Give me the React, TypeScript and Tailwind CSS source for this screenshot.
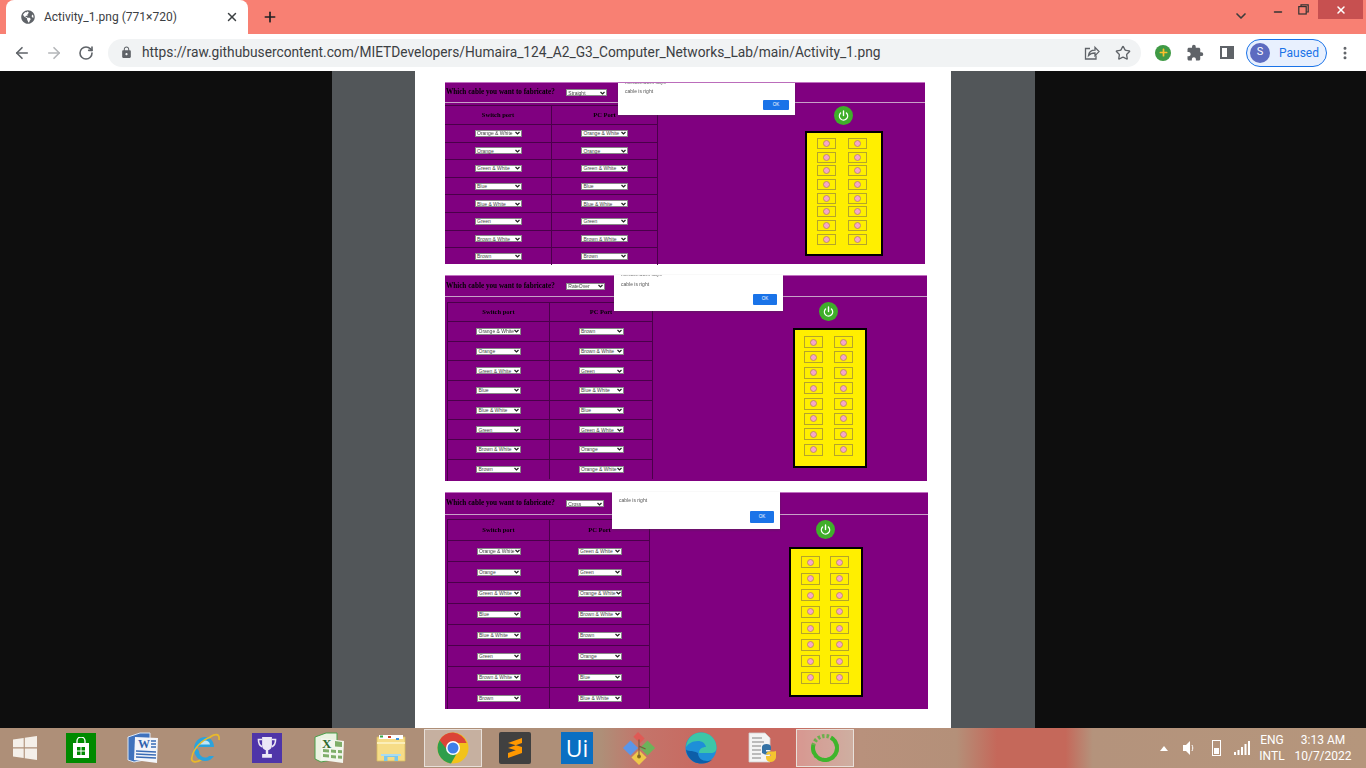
import { ArrowLeft, ArrowRight, RotateCw, Star, X, Plus, ChevronDown, Minus, Power, MoreVertical } from "lucide-react";
import { FaGlobeAmericas, FaPlus } from "react-icons/fa";
import { MdExtension, MdLock } from "react-icons/md";

const straightPc = ["Orange & White", "Orange", "Green & White", "Blue", "Blue & White", "Green", "Brown & White", "Brown"];
const rollPc = ["Brown", "Brown & White", "Green", "Blue & White", "Blue", "Green & White", "Orange", "Orange & White"];
const crossPc = ["Green & White", "Green", "Orange & White", "Brown & White", "Brown", "Orange", "Blue", "Blue & White"];

const panels = [
  {
    cable: "Straight",
    pc: straightPc,
    wrap: "mt-[11px] w-[480px] h-[182px]",
    head: "h-[19px] gap-[11px]",
    tableWrap: "mt-[2px] grid-cols-[107px_106px]",
    headRow: "h-[19px]",
    row: "h-[17.6px]",
    sel: "w-[47px]",
    headSel: "w-[41px]",
    right: "ml-[147px] w-[78px]",
    btn: "mt-[3px] mr-[2px]",
    box: "mt-[6px] h-[125px] pt-[5px] pr-[4px] gap-y-[2.7px] gap-x-[12px]",
    slot: "h-[11px]",
    dialog: "left-[173px] top-0 w-[177px] h-[32px]",
    says: "-mt-[4px] h-[6px]",
    text: "pt-[3px]",
    ok: "right-[6px] bottom-[5px] w-[26px] h-[10px]",
  },
  {
    cable: "RateOver",
    pc: rollPc,
    wrap: "mt-[11px] w-[482px] h-[206px]",
    head: "h-[20px] gap-[11px]",
    tableWrap: "mt-[5px] ml-[2px] border-l border-[#4a004a] grid-cols-[102px_103px]",
    headRow: "h-[19px]",
    row: "h-[19.7px]",
    sel: "w-[45px]",
    headSel: "w-[39px]",
    right: "ml-[140px] w-[74px]",
    btn: "mt-[5px] mr-[4px]",
    box: "mt-[7px] h-[140px] pt-[6px] pr-[3px] gap-y-[3.4px] gap-x-[11px]",
    slot: "h-[12px]",
    dialog: "left-[169px] -top-px w-[169px] h-[36px]",
    says: "-mt-[4px] h-[6px]",
    text: "pt-[4px]",
    ok: "right-[6px] bottom-[6px] w-[24px] h-[11px]",
  },
  {
    cable: "Cross",
    pc: crossPc,
    wrap: "mt-[11px] w-[483px] h-[217px]",
    head: "h-[21px] gap-[11px]",
    tableWrap: "mt-[4px] ml-[2px] border-l border-[#4a004a] grid-cols-[102px_100px]",
    headRow: "h-[21px]",
    row: "h-[21px]",
    sel: "w-[44px]",
    headSel: "w-[38px]",
    right: "ml-[139px] w-[74px]",
    btn: "mt-[5px] mr-[2px]",
    box: "mt-[8px] h-[150px] pt-[7px] pr-[2px] gap-y-[4.5px] gap-x-[10px]",
    slot: "h-[12px]",
    dialog: "left-[167px] -top-px w-[168px] h-[37px]",
    says: "h-[3px]",
    text: "pt-[2px]",
    ok: "right-[6px] bottom-[6px] w-[24px] h-[12px]",
  },
];

const switchSide = straightPc;

function SelectBox({ value, width }: { value: string; width: string }) {
  return (
    <div className={`${width} h-[7px] bg-white border-[0.5px] border-[#888] flex items-center justify-between pl-[1.5px] pr-[1px] text-[5px] leading-[6px] text-[#444] font-['Liberation_Sans',sans-serif] whitespace-nowrap`}>
      <span>{value}</span>
      <svg width="5" height="4" viewBox="0 0 10 8" className="shrink-0">
        <path d="M1 2l4 4 4-4" stroke="#222" strokeWidth="2.400" fill="none" />
      </svg>
    </div>
  );
}

function Slot({ height }: { height: string }) {
  return (
    <div className={`${height} w-[19px] border border-[#b5a52a] flex items-center justify-center`}>
      <div className="w-[7px] h-[7px] rounded-full bg-[#f5a5cc] border-[0.5px] border-[#c09060]" />
    </div>
  );
}

function Panel({ p }: { p: (typeof panels)[number] }) {
  return (
    <div className={`relative ${p.wrap} ml-[30px] bg-[#800080] border-t border-[#c070c0] text-black`}>
      <div className="blur-[0.35px] h-full flex flex-col">
        <div className={`${p.head} flex items-center pl-[1px] shrink-0`}>
          <span className="font-['Liberation_Serif',serif] font-bold text-[7.2px] whitespace-nowrap">Which cable you want to fabricate?</span>
          <SelectBox value={p.cable} width={p.headSel} />
        </div>
        <div className="h-px bg-[#c8a0c8] shrink-0" />
        <div className="flex flex-1 min-h-0">
          <div className={`${p.tableWrap} grid content-start shrink-0`}>
            <div className={`${p.headRow} border-t border-r border-[#4a004a] flex items-center justify-center font-['Liberation_Serif',serif] font-bold text-[6.5px]`}>Switch port</div>
            <div className={`${p.headRow} border-t border-r border-[#4a004a] flex items-center justify-center font-['Liberation_Serif',serif] font-bold text-[6.5px]`}>PC Port</div>
            {switchSide.map((s, i) => (
              <div key={s} className="contents">
                <div className={`${p.row} border-t border-r border-[#4a004a] flex items-center justify-center`}>
                  <SelectBox value={s} width={p.sel} />
                </div>
                <div className={`${p.row} border-t border-r border-[#4a004a] flex items-center justify-center`}>
                  <SelectBox value={p.pc[i]} width={p.sel} />
                </div>
              </div>
            ))}
          </div>
          <div className={`${p.right} flex flex-col items-center`}>
            <div className={`${p.btn} w-[19px] h-[19px] rounded-full bg-[#3fae2a] flex items-center justify-center`}>
              <Power size={11} color="white" strokeWidth={3} />
            </div>
            <div className={`${p.box} w-full border-2 border-black bg-[#ffef00] grid grid-cols-[19px_19px] justify-center content-start`}>
              {Array.from({ length: 16 }).map((_, i) => (
                <Slot key={i} height={p.slot} />
              ))}
            </div>
          </div>
        </div>
      </div>
      <div className={`absolute ${p.dialog} bg-white shadow-[0_1px_2px_rgba(60,60,60,0.4)] overflow-hidden font-['Liberation_Sans',sans-serif] text-[5px] text-[#555] pl-[7px]`}>
        <div className={`${p.says} text-[#666] leading-[6px]`}>{p.cable === "Cross" ? "" : "mietcse.ac.in says"}</div>
        <div className={p.text}>cable is right</div>
        <div className={`absolute ${p.ok} bg-[#1a73e8] rounded-[1px] text-white flex items-center justify-center text-[4.5px]`}>OK</div>
      </div>
    </div>
  );
}

function TabBar() {
  return (
    <div className="h-[34px] bg-[#f88073] flex items-end shrink-0 relative">
      <div className="ml-[6px] w-[242px] h-[34px] bg-white rounded-t-[8px] flex items-center pl-[15px] pr-[9px] text-[12px] text-[#3c4043] font-['Roboto',sans-serif]">
        <FaGlobeAmericas size={14} color="#5f6368" className="shrink-0" />
        <span className="ml-[9px] flex-1 whitespace-nowrap">Activity_1.png (771×720)</span>
        <X size={14} color="#3c4043" strokeWidth={2.500} />
      </div>
      <Plus size={16} color="#202124" strokeWidth={2.500} className="ml-[14px] mb-[9px]" />
      <ChevronDown size={16} color="#3c3c3c" strokeWidth={2.500} className="absolute left-[1233px] top-[8px]" />
      <div className="absolute right-[3px] top-0 flex items-start">
        <Minus size={12} color="#333" strokeWidth={3} className="mr-[14px] mt-[6px]" />
        <svg width="11" height="11" viewBox="0 0 11 11" className="mr-[9px] mt-[4px]" fill="none" stroke="#333" strokeWidth="1.200">
          <rect x="0.800" y="2.600" width="7.400" height="7.400" />
          <path d="M3 2.400V0.800h7.200V8H8.400" />
        </svg>
        <div className="w-[45px] h-[19px] bg-[#c75050] flex items-center justify-center">
          <X size={12} color="white" strokeWidth={3} />
        </div>
      </div>
    </div>
  );
}

function ToolBar() {
  return (
    <div className="h-[37px] bg-white flex items-center shrink-0 relative">
      <ArrowLeft size={18} color="#5f6368" strokeWidth={2.200} className="ml-[13px]" />
      <ArrowRight size={18} color="#b4b6b9" strokeWidth={2.200} className="ml-[14px]" />
      <RotateCw size={16} color="#5f6368" strokeWidth={2.400} className="ml-[15px]" />
      <div className="ml-[14px] w-[1033px] h-[28px] rounded-full bg-[#f1f3f4] flex items-center pl-[12px] pr-[10px]">
        <MdLock size={13} color="#5f6368" />
        <span className="ml-[9px] flex-1 text-[13.75px] text-[#3c4043] font-['Roboto',sans-serif] whitespace-nowrap">https://raw.githubusercontent.com/MIETDevelopers/Humaira_124_A2_G3_Computer_Networks_Lab/main/Activity_1.png</span>
        <svg width="16" height="16" viewBox="0 0 16 16" fill="none" stroke="#5f6368" strokeWidth="1.300" className="mr-[15px]">
          <path d="M6 3.500H1.500v10.500h10.500V10.500" />
          <path d="M4.500 10.500c.4-3.400 3-5.400 6.500-5.400V2.400l4 4.200-4 4V8c-2.900 0-5 .8-6.500 2.500z" />
        </svg>
        <Star size={16} color="#5f6368" strokeWidth={2} />
      </div>
      <div className="ml-[14px] w-[16px] h-[16px] rounded-full bg-[#3f9a45] flex items-center justify-center">
        <FaPlus size={9} color="#fbc02d" />
      </div>
      <MdExtension size={18} color="#5f6368" className="ml-[15px]" />
      <div className="ml-[16px] w-[14px] h-[13px] border-2 border-[#5f6368] flex justify-end">
        <div className="w-[5px] bg-[#5f6368]" />
      </div>
      <div className="ml-[12px] w-[81px] h-[28px] rounded-full border border-[#1a73e8] bg-[#e8f0fe] flex items-center pl-[3px]">
        <div className="w-[20px] h-[20px] rounded-full bg-[#5c6bc0] text-white text-[11px] flex items-center justify-center font-['Roboto',sans-serif]">S</div>
        <span className="ml-[9px] text-[12px] text-[#1a73e8] font-['Roboto',sans-serif]">Paused</span>
      </div>
      <MoreVertical size={16} color="#5f6368" strokeWidth={2.500} className="ml-[10px]" />
    </div>
  );
}

function WindowsLogo() {
  return (
    <svg width="26" height="24" viewBox="0 0 22 22" fill="#f4efe9">
      <path d="M0 3.200 9.800 1.800V10.400H0zM10.800 1.600 22 0V10.400H10.800zM0 11.500H9.800V20.200L0 18.800zM10.800 11.500H22V22L10.800 20.400z" />
    </svg>
  );
}

function Store() {
  return (
    <div className="w-[30px] h-[30px] bg-[#008a00] flex items-center justify-center">
      <svg width="20" height="22" viewBox="0 0 20 22">
        <path d="M6 6V4a4 4 0 0 1 8 0v2" stroke="white" fill="none" strokeWidth="1.300" />
        <path d="M2 6h16v15H2z" fill="white" />
        <path d="M6 10h3.500v3.500H6zM10.500 10H14v3.500h-3.500zM6 14.500h3.500V18H6zM10.500 14.500H14V18h-3.500z" fill="#008a00" />
      </svg>
    </div>
  );
}

function Word() {
  return (
    <svg width="32" height="32" viewBox="0 0 32 32">
      <path d="M1 5 13 1h10v26L7 30l-6-2z" fill="#3f72bd" stroke="#dbe6f5" strokeWidth="1" />
      <path d="M8 5l23 1-1 25-23-3z" fill="#f3f5fa" />
      <text x="11" y="16" fontSize="12" fontWeight="700" fill="#2f62ae" fontFamily="Liberation Serif, serif">W</text>
      <path d="M24 9h5M24 12h5M24 15h5M9 19l20 1M9 22l20 1M9 25l20 1" stroke="#3a6cb5" strokeWidth="1.500" />
    </svg>
  );
}

function IE() {
  return (
    <svg width="32" height="32" viewBox="0 0 32 32">
      <path d="M3 25C1 31 8 31 13 27M21 5C26 2 31 1 30 8" fill="none" stroke="#e8b92c" strokeWidth="1.800" />
      <path d="M7 15h18c0-6-4-10-9-10C10 5 5 10 5 17s5 12 11 12c4 0 7-2 9-5h-5c-1 1-2 1.500-4 1.500-3.500 0-6-3-6-6.500z" fill="#2ba3dd" />
      <path d="M11 12.500h10c-.5-2.500-2.500-4-5-4s-4.500 1.500-5 4z" fill="#bfe6f7" />
      <path d="M22 5C12 8 4 18 3 25" fill="none" stroke="#e8b92c" strokeWidth="1.500" />
    </svg>
  );
}

function Trophy() {
  return (
    <div className="w-[30px] h-[30px] bg-[#4f35a8] flex items-center justify-center">
      <svg width="20" height="22" viewBox="0 0 16 18" fill="#ece8f6">
        <path d="M4 0h8v7a4 4 0 0 1-8 0zM7 10h2v4h3v3H4v-3h3z" />
        <path d="M4 2H1c0 3 1 5 3 6M12 2h3c0 3-1 5-3 6" fill="none" stroke="#ece8f6" strokeWidth="1.300" />
      </svg>
    </div>
  );
}

function Excel() {
  return (
    <svg width="32" height="32" viewBox="0 0 32 32">
      <path d="M2 5 13 1h11v26L8 30l-6-3z" fill="#eaf3e2" stroke="#4ba04b" strokeWidth="1" />
      <path d="M8 6l23 3-1 22-22-3z" fill="#f3f6ee" />
      <path d="M10 17l6 .5v3l-6-.5zM18 17.500l5 .5v3l-5-.5zM25 18l4 .3v3l-4-.3zM10 22l6 .5v3l-6-.5zM18 23l5 .5v3l-5-.5zM25 23.500l4 .3v3l-4-.3zM22 9l7 1v5l-7-.5z" fill="#7fae6a" />
      <text x="9" y="16" fontSize="13" fontWeight="700" fill="#2d6a2d" fontFamily="Liberation Serif, serif">X</text>
    </svg>
  );
}

function Folder() {
  return (
    <svg width="30" height="30" viewBox="0 0 30 30">
      <path d="M1 4h28v24H1z" fill="#f6dc87" stroke="#d8bb60" strokeWidth="0.800" />
      <path d="M3 2h24v4H3z" fill="#fff" />
      <rect x="4" y="2.500" width="3" height="2" fill="#3aa648" />
      <rect x="12" y="3" width="3" height="2" fill="#c8402e" />
      <rect x="20" y="5" width="3" height="2" fill="#3a8fd8" />
      <path d="M1 10h28" stroke="#fbeeb9" strokeWidth="2" />
      <path d="M8 28v-7h14v7h-3.500v-4h-7v4z" fill="#7cc8ea" />
      <path d="M5 21h20v2H5z" fill="#a8dcf2" />
    </svg>
  );
}

function ChromeLogo() {
  return (
    <svg width="32" height="32" viewBox="0 0 32 32">
      <circle cx="16" cy="16" r="15.500" fill="#f2c31a" />
      <path d="M16 .500A15.500 15.500 0 0 0 2.600 8.300L9 19l7-8h13.600A15.500 15.500 0 0 0 16 .500z" fill="#db4437" />
      <path d="M2.600 8.300A15.500 15.500 0 0 0 14 31.400L20 21l-9-2z" fill="#2f9e4b" />
      <circle cx="16" cy="16" r="7" fill="white" />
      <circle cx="16" cy="16" r="5.500" fill="#3f7fe8" />
    </svg>
  );
}

function Sublime() {
  return (
    <div className="w-[32px] h-[32px] bg-[#404040] rounded-[2px] flex items-center justify-center">
      <svg width="16" height="22" viewBox="0 0 16 22" fill="#ff9800">
        <path d="M1 6 15 1v5L1 11zM1 11l14 4v-5L1 6zM15 11 1 16v5l14-5z" />
      </svg>
    </div>
  );
}

function Ui() {
  return (
    <div className="w-[32px] h-[32px] bg-[#0a6fc2] flex items-center justify-center text-white text-[23px] leading-none font-['Open_Sans',sans-serif]">Ui</div>
  );
}

function Diamonds() {
  return (
    <svg width="34" height="34" viewBox="0 0 36 36">
      <path d="M9 10l8 8-8 8-8-8z" fill="#5b96e8" />
      <path d="M17 1l7 7-5 5-7-7z" fill="#df5a55" />
      <path d="M27 10l8 8-8 8-8-8z" fill="#6cb35a" />
      <path d="M18 20l8 8-8 8-8-8z" fill="#eec84a" />
      <circle cx="18" cy="27" r="2" fill="#8a6d1a" />
      <path d="M18 9v18M18 16l7 3" stroke="#7a5a40" strokeWidth="1.200" />
    </svg>
  );
}

function Edge() {
  return (
    <svg width="32" height="32" viewBox="0 0 32 32">
      <circle cx="16" cy="16" r="15.500" fill="#1e8fd8" />
      <path d="M1 15C2 6 8 .500 16 .500 25 .500 31.500 7 31.500 16c0 3-2 5-6 5H14c0-4 3-6 7-6-1-4-4-6-8-6-6 0-10 3-12 6z" fill="#3cc6a8" />
      <path d="M13 21c0 5 4 8 9 8 2 0 4-.5 6-2-3 3-7 4.500-12 4.500-8 0-14-6-15-14 1 2 6 .5 12 3.500z" fill="#0d5ea8" />
    </svg>
  );
}

function PythonFile() {
  return (
    <svg width="30" height="32" viewBox="0 0 30 32">
      <path d="M1 1h16l5 5v24H1z" fill="#f4f4f4" stroke="#cfcfcf" strokeWidth="0.800" />
      <path d="M4 6h10M4 10h12M4 14h9M4 18h9M4 22h9M4 26h9" stroke="#a8a8a8" strokeWidth="1.300" />
      <path d="M14 21v-6c0-2 2-3 4.500-3s4.500 1 4.500 3v3h-5v1.500h5c0 2-2 3-4 3h-2z" fill="#3572a5" />
      <path d="M28 19v6c0 2-2 5-5 5s-5-2-5-4v-2h5v-1.500h-5c0-1 1-3 3-3h5z" fill="#f4c430" />
    </svg>
  );
}

function GreenRing() {
  return (
    <svg width="30" height="30" viewBox="0 0 30 30">
      <circle cx="15" cy="15" r="12" fill="none" stroke="#3fb52c" strokeWidth="4" strokeDasharray="53 22.400" transform="rotate(-60 15 15)" />
      <circle cx="15" cy="15" r="12" fill="none" stroke="#3fb52c" strokeWidth="4" strokeDasharray="2.500 2" opacity="0.700" transform="rotate(-190 15 15)" pathLength="75.400" strokeDashoffset="0" />
    </svg>
  );
}

const taskIcons = [
  { key: "store", node: <Store /> },
  { key: "word", node: <Word /> },
  { key: "ie", node: <IE /> },
  { key: "trophy", node: <Trophy /> },
  { key: "excel", node: <Excel /> },
  { key: "folder", node: <Folder /> },
  { key: "chrome", node: <ChromeLogo />, active: true },
  { key: "sublime", node: <Sublime /> },
  { key: "ui", node: <Ui /> },
  { key: "diamonds", node: <Diamonds /> },
  { key: "edge", node: <Edge /> },
  { key: "python", node: <PythonFile /> },
  { key: "ring", node: <GreenRing />, active: true },
];

function Taskbar() {
  return (
    <div className="h-[40px] shrink-0 flex items-center bg-[#b2927b] bg-[linear-gradient(90deg,#ae8f78_0%,#ae8f78_44%,#c4746a_47%,#c8685f_52%,#c8685f_58%,#b8917c_63%,#b49079_70%,#c5685a_73%,#c5685a_78%,#b4937c_80%,#b5967c_100%)] font-['Roboto',sans-serif] text-white">
      <div className="w-[50px] flex justify-center">
        <WindowsLogo />
      </div>
      {taskIcons.map((t) => (
        <div key={t.key} className="w-[62px] h-[40px] flex items-center justify-center">
          <div className={`w-[58px] h-[38px] flex items-center justify-center ${t.active ? "border border-[#e8e0da] bg-white/30" : ""}`}>
            {t.node}
          </div>
        </div>
      ))}
      <div className="ml-auto flex items-center pr-[9px]">
        <div className="w-0 h-0 border-l-[4px] border-r-[4px] border-b-[5px] border-l-transparent border-r-transparent border-b-white" />
        <svg width="14" height="16" viewBox="0 0 14 16" fill="white" className="ml-[14px]">
          <path d="M1 5h3l4-4v14l-4-4H1z" />
          <path d="M10 5c1 2 1 4 0 6" stroke="white" fill="none" />
        </svg>
        <div className="ml-[16px] w-[9px] h-[16px] border border-white flex items-end p-px">
          <div className="w-full h-[6px] bg-white" />
        </div>
        <svg width="16" height="14" viewBox="0 0 16 14" fill="white" className="ml-[13px]">
          <path d="M0 11h2v3H0zM3.500 9h2v5h-2zM7 6h2v8H7zM10.500 3h2v11h-2zM14 0h2v14h-2z" />
        </svg>
        <div className="ml-[5px] w-[34px] text-center text-[12px] leading-[16px] flex flex-col">
          <span>ENG</span>
          <span>INTL</span>
        </div>
        <div className="w-[68px] text-center text-[12px] leading-[16px] flex flex-col">
          <span>3:13 AM</span>
          <span>10/7/2022</span>
        </div>
      </div>
    </div>
  );
}

export default function App() {
  return (
    <div className="w-[1366px] h-[768px] overflow-hidden flex flex-col bg-[#0e0e0e]">
      <TabBar />
      <ToolBar />
      <div className="flex-1 min-h-0 flex justify-center">
        <div className="w-[703px] bg-[#525659] flex justify-center">
          <div className="w-[536px] bg-white flex flex-col">
            {panels.map((p) => (
              <Panel key={p.cable} p={p} />
            ))}
          </div>
        </div>
      </div>
      <Taskbar />
    </div>
  );
}
